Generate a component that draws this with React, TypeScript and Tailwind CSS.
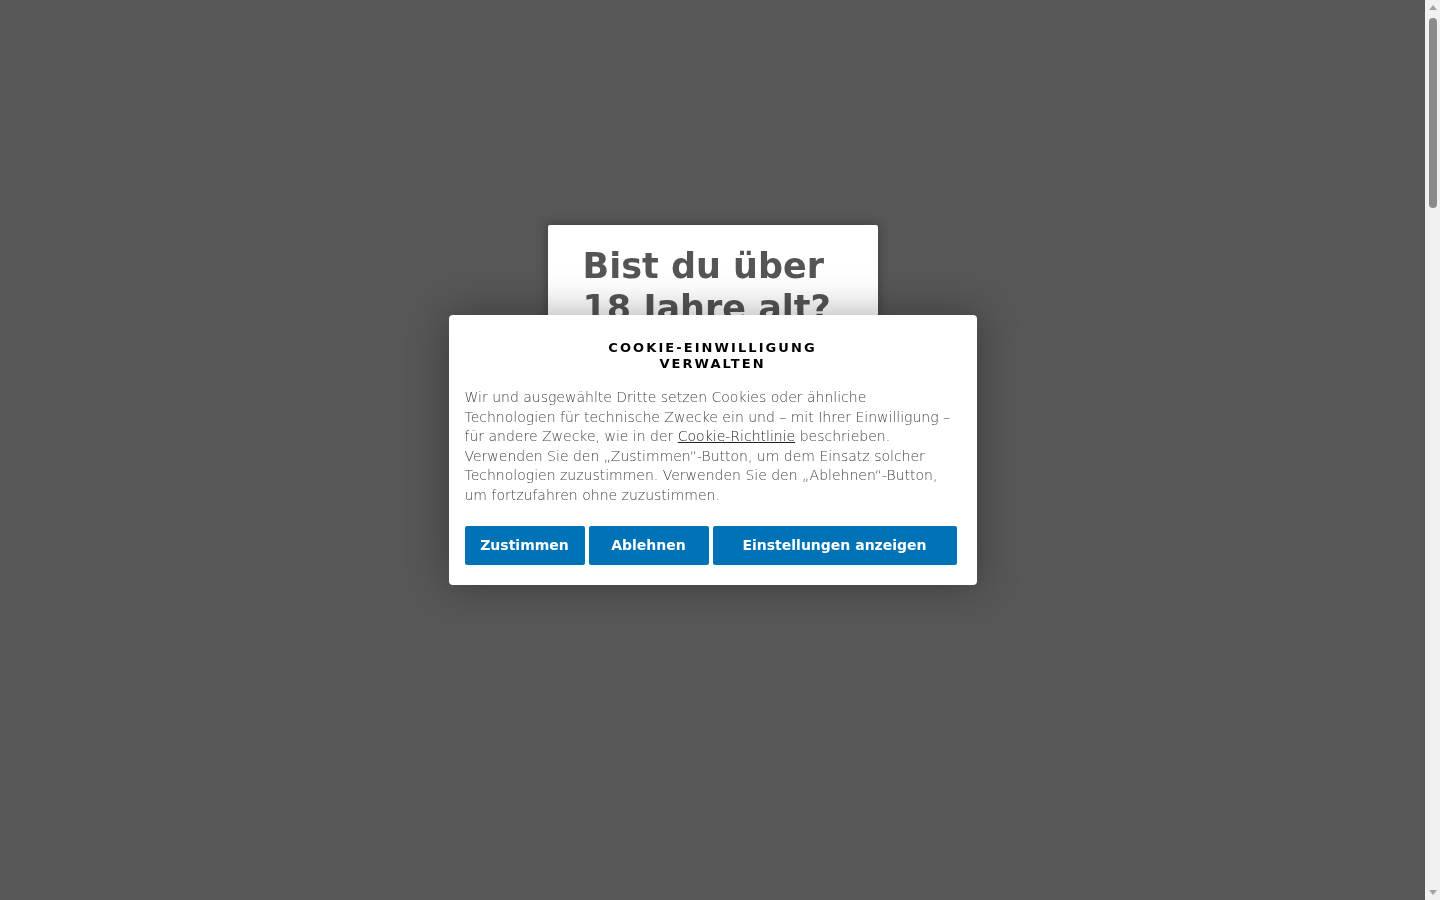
export default function App() {
  return (
    <div className="min-h-[4100px] bg-[#575757] font-['DejaVu_Sans',sans-serif]">
      {/* age gate card */}
      <div className="fixed left-[calc(50%-7.5px)] top-[225px] w-[330px] -translate-x-1/2 rounded-[2px] bg-white px-[35px] pt-[20px] pb-[40px] shadow-[0_0_12px_rgba(0,0,0,0.35)]">
        <h1 className="text-[35px] font-bold leading-[42px] text-[#555555]">
          Bist du über 18 Jahre alt?
        </h1>
        <p className="mt-6 text-[14px] text-[#555555]">Bitte bestätige dein Alter.</p>
        <div className="mt-6 flex gap-3">
          <div className="h-10 flex-1 rounded bg-[#555555]" />
          <div className="h-10 flex-1 rounded bg-[#555555]" />
        </div>
      </div>

      {/* cookie consent dialog */}
      <div className="fixed left-[calc(50%-7.5px)] top-[315px] w-[528px] -translate-x-1/2 rounded-[4px] bg-white px-4 pt-[25px] pb-[20px] shadow-[0_0_40px_rgba(0,0,0,0.35)]">
        <h2 className="mx-auto w-[260px] text-center text-[13px] font-bold uppercase leading-[16px] tracking-[0.16em] text-black">
          Cookie-Einwilligung verwalten
        </h2>
        <p className="mt-[16px] text-[14px] font-extralight leading-[19.6px] text-[#444444]">
          Wir und ausgewählte Dritte setzen Cookies oder ähnliche Technologien für technische Zwecke ein und – mit Ihrer Einwilligung – für andere Zwecke, wie in der{' '}
          <a href="#" className="text-[#222222] underline">Cookie-Richtlinie</a> beschrieben. Verwenden Sie den „Zustimmen“-Button, um dem Einsatz solcher Technologien zuzustimmen. Verwenden Sie den „Ablehnen“-Button, um fortzufahren ohne zuzustimmen.
        </p>
        <div className="mt-[20px] flex gap-1">
          <button className="h-[39px] w-[120px] rounded-[2px] bg-[#0073b7] text-[14px] font-bold text-white">Zustimmen</button>
          <button className="h-[39px] w-[120px] rounded-[2px] bg-[#0073b7] text-[14px] font-bold text-white">Ablehnen</button>
          <button className="h-[39px] w-[244px] rounded-[2px] bg-[#0073b7] text-[14px] font-bold text-white">Einstellungen anzeigen</button>
        </div>
      </div>

      {/* scrollbar */}
      <div className="fixed right-0 top-0 flex h-full w-[15px] flex-col items-center bg-[#f1f1f1]">
        <div className="mt-[5px] h-0 w-0 border-x-[4px] border-b-[5px] border-x-transparent border-b-[#a3a3a3]" />
        <div className="mt-[8px] h-[190px] w-[8px] rounded-full bg-[#8a8a8a]" />
        <div className="flex-1" />
        <div className="mb-[5px] h-0 w-0 border-x-[4px] border-t-[5px] border-x-transparent border-t-[#a3a3a3]" />
      </div>
    </div>
  )
}
